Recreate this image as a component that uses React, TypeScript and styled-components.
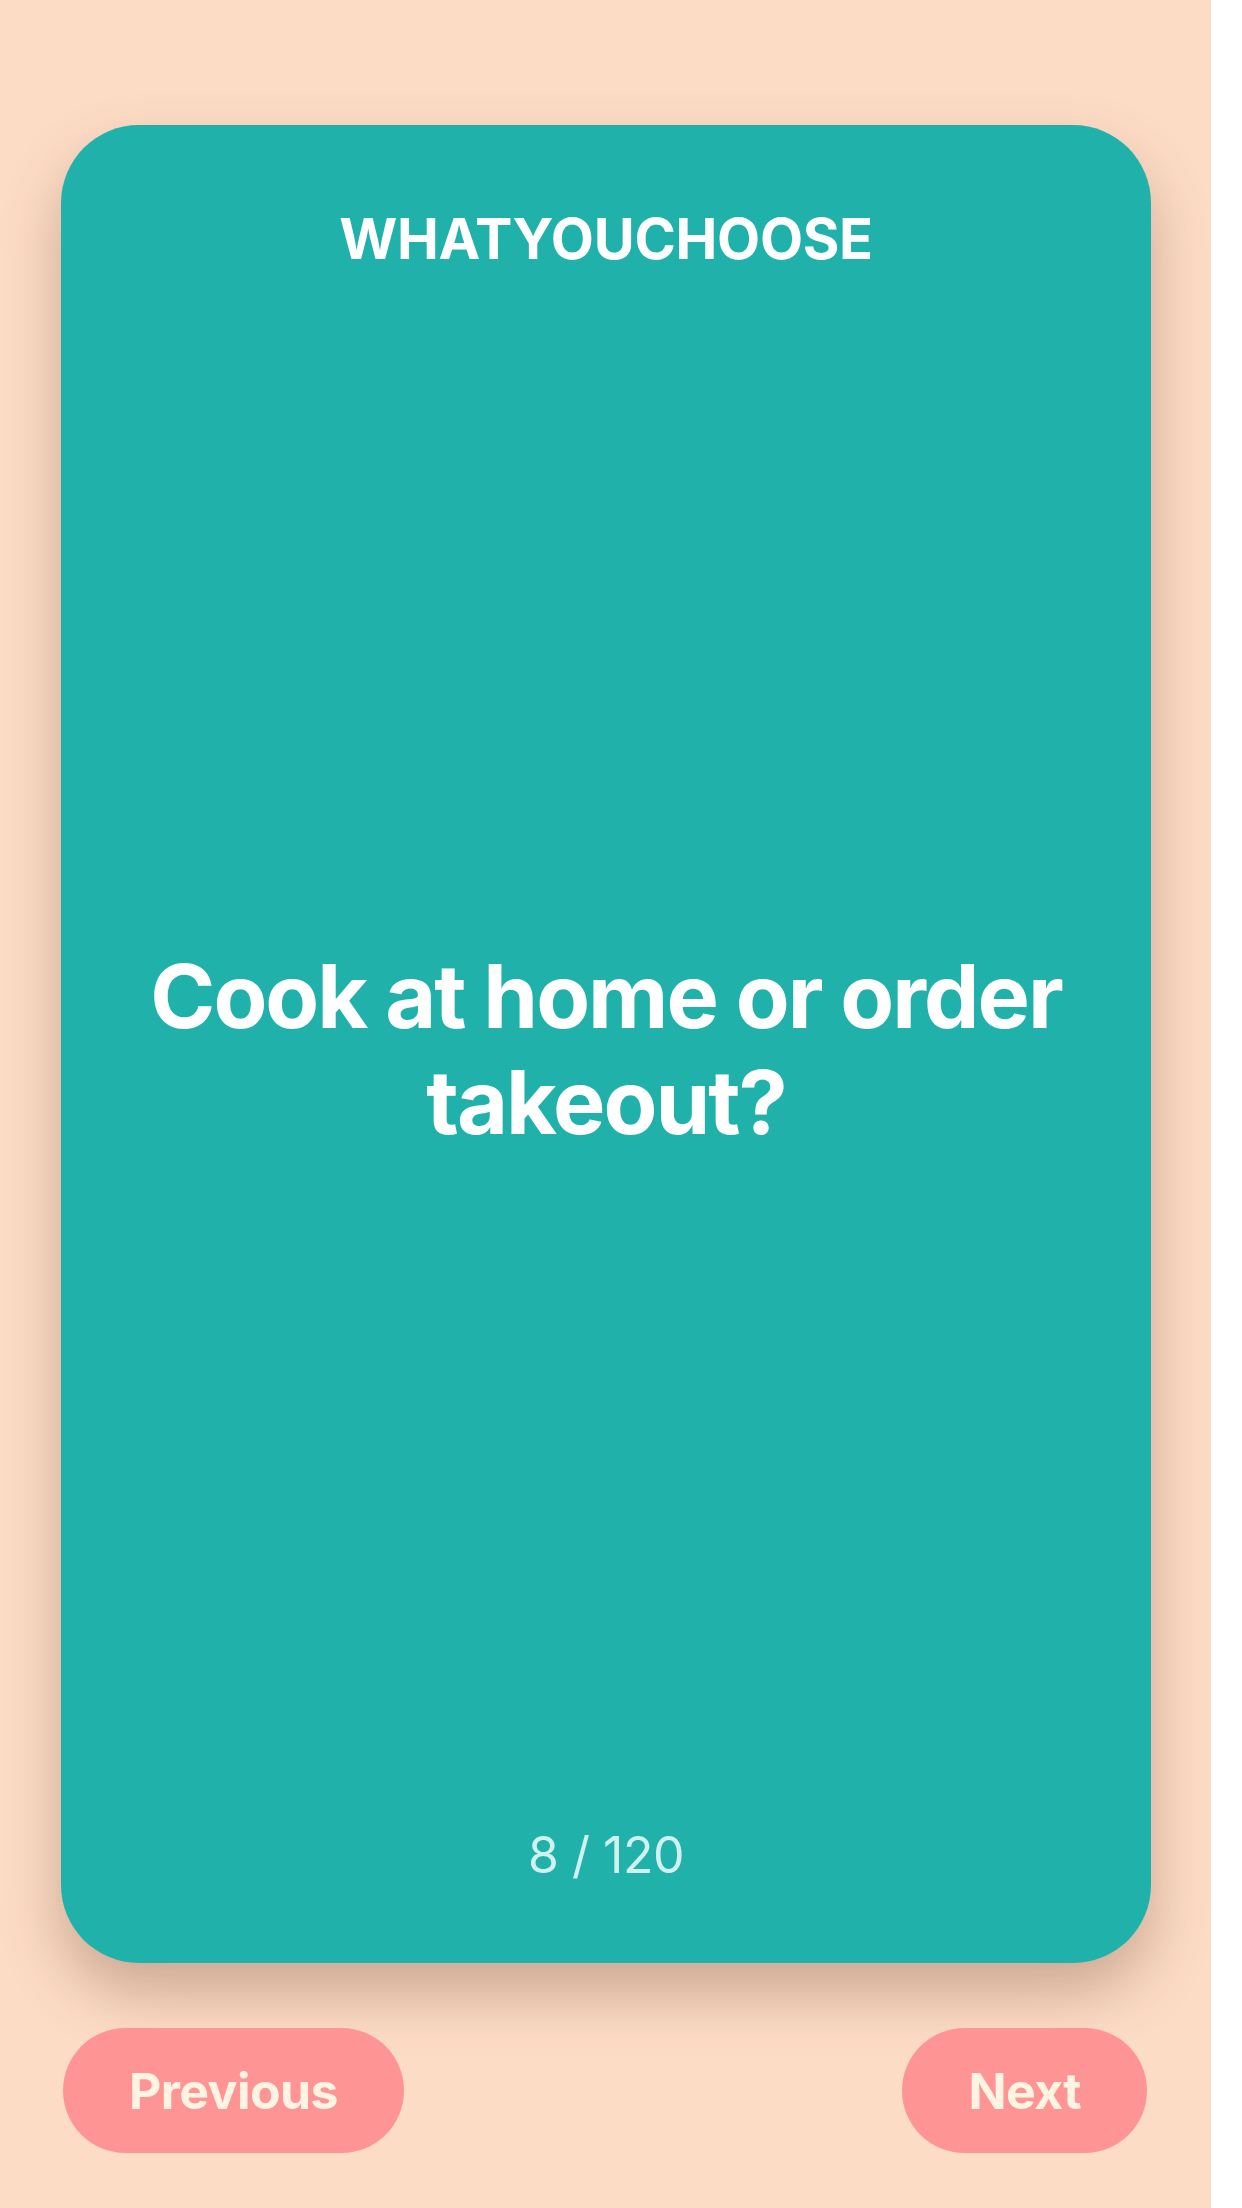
import React, { useState } from 'react';
import styled, { createGlobalStyle } from 'styled-components';

const GlobalStyle = createGlobalStyle`
  html, body {
    margin: 0;
    padding: 0;
    background: #ffffff;
  }
  body {
    font-family: Inter, "Noto Sans", "Liberation Sans", sans-serif;
  }
`;

const Screen = styled.main`
  width: 1211px;
  min-height: 2208px;
  box-sizing: border-box;
  padding: 125px 60px 0 61px;
  background: #fddcc6;
  display: flex;
  flex-direction: column;
  gap: 65px;
`;

const Card = styled.section`
  height: 1838px;
  box-sizing: border-box;
  padding: 80px 70px 78px;
  border-radius: 78px;
  background: #20b2aa;
  box-shadow: 0 30px 60px rgba(90, 50, 30, 0.3);
  display: flex;
  flex-direction: column;
  align-items: center;
`;

const Brand = styled.h1`
  margin: 0;
  font-size: 56px;
  line-height: 68px;
  font-weight: 700;
  color: #ffffff;
  letter-spacing: -0.3px;
`;

const QuestionArea = styled.div`
  flex: 1;
  display: flex;
  align-items: center;
  justify-content: center;
`;

const Question = styled.p`
  margin: 0;
  font-size: 88px;
  line-height: 106px;
  font-weight: 700;
  color: #ffffff;
  text-align: center;
  letter-spacing: -2px;
`;

const Counter = styled.div`
  font-size: 50px;
  line-height: 60px;
  font-weight: 400;
  color: rgba(255, 255, 255, 0.8);
  letter-spacing: -0.5px;
`;

const Controls = styled.nav`
  display: flex;
  justify-content: space-between;
  padding: 0 4px 0 2px;
`;

const NavButton = styled.button`
  height: 125px;
  padding: 0 66px;
  border: none;
  border-radius: 63px;
  background: #ff9494;
  color: #fff4e2;
  font-family: inherit;
  font-size: 50px;
  font-weight: 700;
  letter-spacing: -0.6px;
  cursor: pointer;
`;

export default function App() {
  const [index] = useState(7);
  const total = 120;

  return (
    <>
      <GlobalStyle />
      <Screen>
        <Card>
          <Brand>WHATYOUCHOOSE</Brand>
          <QuestionArea>
            <Question>Cook at home or order takeout?</Question>
          </QuestionArea>
          <Counter>
            {index + 1} / {total}
          </Counter>
        </Card>
        <Controls>
          <NavButton>Previous</NavButton>
          <NavButton>Next</NavButton>
        </Controls>
      </Screen>
    </>
  );
}
